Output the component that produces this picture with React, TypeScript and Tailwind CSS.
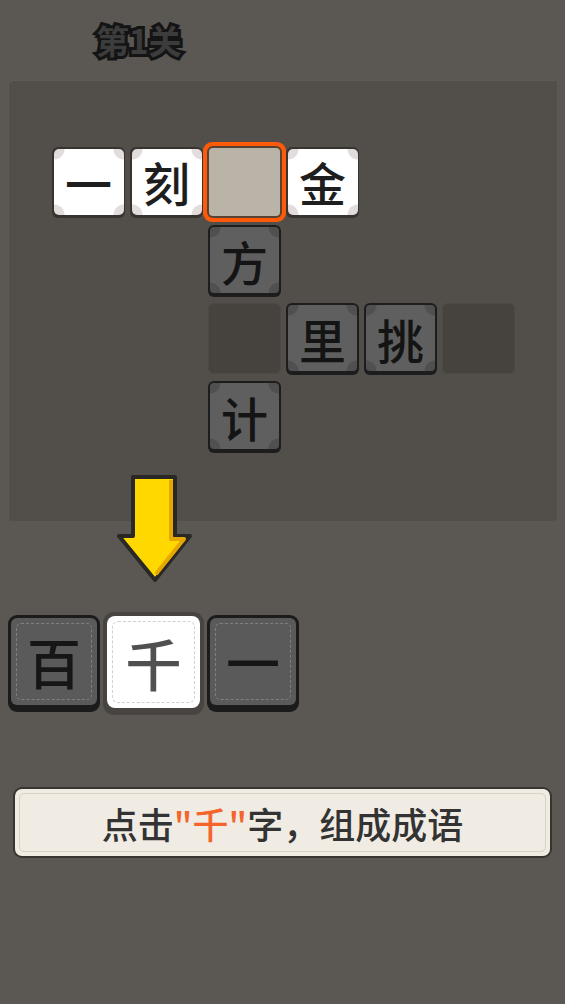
import React from "react";

const cjk = "font-['Noto_Sans_CJK_SC','Noto_Sans_CJK_JP',sans-serif]";

const whiteCorners =
  "bg-[radial-gradient(circle_at_0_0,#e2dcdc_10px,transparent_11px),radial-gradient(circle_at_100%_0,#e2dcdc_10px,transparent_11px),radial-gradient(circle_at_0_100%,#e2dcdc_10px,transparent_11px),radial-gradient(circle_at_100%_100%,#e2dcdc_10px,transparent_11px)]";
const darkCorners =
  "bg-[radial-gradient(circle_at_0_0,#505050_10px,transparent_11px),radial-gradient(circle_at_100%_0,#505050_10px,transparent_11px),radial-gradient(circle_at_0_100%,#505050_10px,transparent_11px),radial-gradient(circle_at_100%_100%,#505050_10px,transparent_11px)]";

type Cell =
  | { kind: "white"; ch: string }
  | { kind: "dark"; ch: string }
  | { kind: "empty" }
  | { kind: "focus" }
  | { kind: "none" };

const W = (ch: string): Cell => ({ kind: "white", ch });
const D = (ch: string): Cell => ({ kind: "dark", ch });
const E: Cell = { kind: "empty" };
const F: Cell = { kind: "focus" };
const N: Cell = { kind: "none" };

const grid: Cell[][] = [
  [W("一"), W("刻"), F, W("金"), N, N],
  [N, N, D("方"), N, N, N],
  [N, N, E, D("里"), D("挑"), E],
  [N, N, D("计"), N, N, N],
];

function GridTile({ cell }: { cell: Cell }) {
  if (cell.kind === "none") return <div className="w-[73px] h-[73px]" />;
  if (cell.kind === "empty")
    return (
      <div className="w-[73px] h-[71px] rounded-[6px] bg-[#46423e] border border-[#4c4844]" />
    );
  if (cell.kind === "focus")
    return (
      <div className="w-[83px] h-[80px] -ml-[5px] -mt-[5px] rounded-[9px] bg-[#ff5a0a] p-[4px]">
        <div className="w-full h-full rounded-[6px] bg-[#5a4233] p-[2px]">
          <div className="w-full h-full rounded-[4px] bg-[#bab3a8]" />
        </div>
      </div>
    );
  if (cell.kind === "white")
    return (
      <div className="w-[73px] h-[71px] rounded-[6px] bg-[#37332f] p-[1.5px] pb-[3.5px]">
        <div
          className={`w-full h-full rounded-[5px] bg-white ${whiteCorners} flex items-center justify-center text-[47px] font-medium leading-none text-[#1e1e1e] ${cjk}`}
        >
          {cell.ch}
        </div>
      </div>
    );
  return (
    <div className="w-[73px] h-[72px] rounded-[6px] bg-[#1d1d1d] p-[2px] pb-[4px]">
      <div
        className={`w-full h-full rounded-[4px] bg-[#5f5f5f] ${darkCorners} flex items-center justify-center text-[47px] font-medium leading-none text-[#141414] ${cjk}`}
      >
        {cell.ch}
      </div>
    </div>
  );
}

function DarkChoice({ ch }: { ch: string }) {
  return (
    <div className="w-[92px] h-[97px] mt-[3px] rounded-[9px] bg-[#1b1b1b] p-[3px] pb-[7px]">
      <div className="w-full h-full rounded-[6px] bg-[#5a5a5a] p-[5px]">
        <div
          className={`w-full h-full rounded-[5px] border-[1.5px] border-dashed border-[#808080] flex items-center justify-center text-[54px] font-medium leading-none text-[#161616] ${cjk}`}
        >
          {ch}
        </div>
      </div>
    </div>
  );
}

function Arrow() {
  return (
    <svg width="80" height="114" viewBox="0 0 80 114" className="absolute left-[115px] top-[473px]">
      <polygon
        points="18,4 60,4 60,63 75,63 40,107 4,63 18,63"
        fill="#ffd800"
        stroke="#2a2826"
        strokeWidth="4"
        strokeLinejoin="round"
      />
      <polyline
        points="56,7 56,66 69,66 41,101"
        fill="none"
        stroke="#e6a800"
        strokeWidth="4"
        strokeLinejoin="round"
      />
    </svg>
  );
}

export default function App() {
  return (
    <div className="relative w-[565px] h-[1004px] bg-[#5b5854] overflow-hidden">
      <div className="h-[80px] pl-[96px] pt-[20px]">
        <span
          className={`text-[33px] font-bold leading-[40px] text-[#3c3c3c] [-webkit-text-stroke:6px_#141414] [paint-order:stroke_fill] ${cjk}`}
        >
          第1关
        </span>
      </div>

      <div className="mx-[8px] h-[441px] rounded-[4px] bg-[#524e4a] shadow-[inset_1px_1px_0_#5e5a56] pt-[67px] pl-[44px]">
        <div className="grid grid-cols-[repeat(6,73px)] grid-rows-[repeat(4,73px)] gap-[5px]">
          {grid.flat().map((c, i) => (
            <GridTile key={i} cell={c} />
          ))}
        </div>
      </div>

      <div className="mt-[91px] pl-[8px] flex items-start gap-[5px]">
        <DarkChoice ch="百" />
        <div className="w-[101px] h-[103px] rounded-[11px] bg-[#474441] p-[4px] pb-[7px] -mx-[2px]">
          <div className="w-full h-full rounded-[8px] bg-white p-[5px]">
            <div
              className={`w-full h-full rounded-[6px] border-[1.5px] border-dashed border-[#d0d0d0] flex items-center justify-center text-[56px] font-medium leading-none text-[#505050] ${cjk}`}
            >
              千
            </div>
          </div>
        </div>
        <DarkChoice ch="一" />
      </div>

      <div className="mt-[72px] mx-[13px] h-[71px] rounded-[9px] bg-[#38342f] p-[2px]">
        <div className="w-full h-full rounded-[7px] bg-[#f1ece3] p-[4px]">
          <div
            className={`w-full h-full rounded-[5px] border-[1.5px] border-[#d8d2c4] flex items-center justify-center text-[36px] font-medium leading-none text-[#333333] ${cjk}`}
          >
            点击<span className="text-[#f4652d]">"千"</span>字，组成成语
          </div>
        </div>
      </div>

      <Arrow />
    </div>
  );
}
